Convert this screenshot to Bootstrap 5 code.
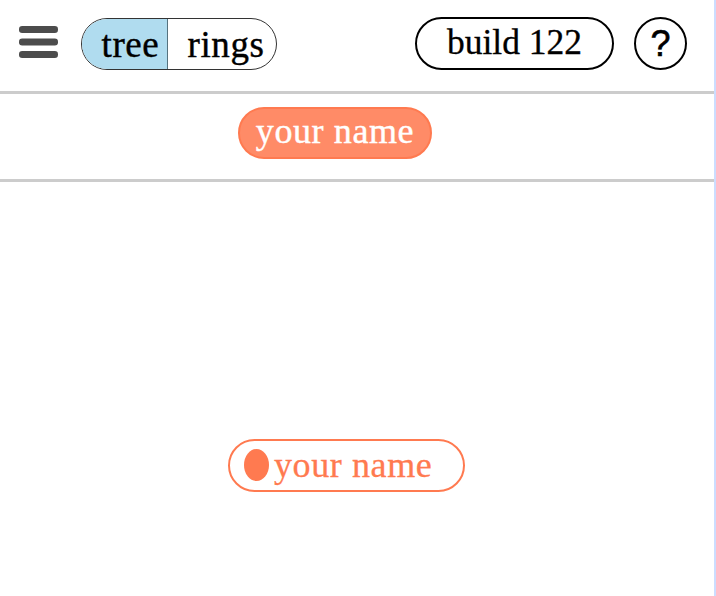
<!DOCTYPE html>
<html lang="en">
<head>
<meta charset="utf-8">
<meta name="viewport" content="width=device-width, initial-scale=1">
<title>tree rings</title>
<link href="https://cdn.jsdelivr.net/npm/bootstrap@5.3.0/dist/css/bootstrap.min.css" rel="stylesheet">
<style>
body{font-family:"Liberation Serif","Times New Roman",serif;color:#000;height:596px}
.app-shell{height:596px;border-right:2px solid #ccddff}
.top-bar{height:94px;border-bottom:3px solid #ccc;padding:17px 27px 0 19px}
.menu-icon{margin-top:8px}
.view-switch{width:196px;height:52px;margin-left:23px;margin-top:.5px;border:1px solid #333;border-radius:26px;font-size:37px;letter-spacing:.6px;line-height:51px;-webkit-text-stroke:.4px #000}
.view-tree{width:86px;padding-left:19.5px;background:#b0dcef;border-right:1px solid #55727e}
.view-rings{padding-left:19.5px}
.pill{height:53px;border:2px solid #000;border-radius:27px;line-height:47px}
.build-pill{width:199px;font-size:35.5px;margin-right:20px;-webkit-text-stroke:.3px #000}
.help-pill{width:53px;font:36px/49px "Liberation Sans",Arial,sans-serif;-webkit-text-stroke:.6px #000}
.crumb-bar{height:88px;border-bottom:3px solid #ccc;padding:13px 0 0 238px}
.name-pill{width:194px;height:52px;border-color:#ff7a50;background:#ff8b67;color:#fff;font-size:36px;letter-spacing:.6px;line-height:45px;-webkit-text-stroke:.4px #fff}
.canvas-area{padding:257px 0 0 228px}
.node-pill{width:237px;padding-left:14px;border-color:#ff7a50;color:#ff7a50;font-size:36px;letter-spacing:.6px;line-height:49px;-webkit-text-stroke:.3px #ff7a50}
.node-dot{width:25px;height:32px;border-radius:50%;background:#ff7a50;margin:-1px 5px 0 0}
</style>
</head>
<body class="bg-white overflow-hidden">
<div class="app-shell d-flex flex-column">
  <header class="top-bar d-flex align-items-start flex-shrink-0">
    <svg class="menu-icon flex-shrink-0" width="39" height="34" viewBox="0 0 39 34" fill="#4c4c4c" role="img" aria-label="menu">
      <rect y="1" width="39" height="7" rx="3.2"/><rect y="13.5" width="39" height="7" rx="3.2"/><rect y="26" width="39" height="7" rx="3.2"/>
    </svg>
    <div class="view-switch d-flex overflow-hidden text-nowrap">
      <div class="view-tree">tree</div><div class="view-rings">rings</div>
    </div>
    <div class="pill build-pill ms-auto text-center text-nowrap">build 122</div>
    <div class="pill help-pill text-center">?</div>
  </header>
  <nav class="crumb-bar flex-shrink-0">
    <div class="pill name-pill text-center text-nowrap">your name</div>
  </nav>
  <main class="canvas-area flex-grow-1">
    <div class="pill node-pill d-flex align-items-center text-nowrap"><span class="node-dot"></span><span>your name</span></div>
  </main>
</div>
<script src="https://cdn.jsdelivr.net/npm/bootstrap@5.3.0/dist/js/bootstrap.bundle.min.js"></script>
</body>
</html>
